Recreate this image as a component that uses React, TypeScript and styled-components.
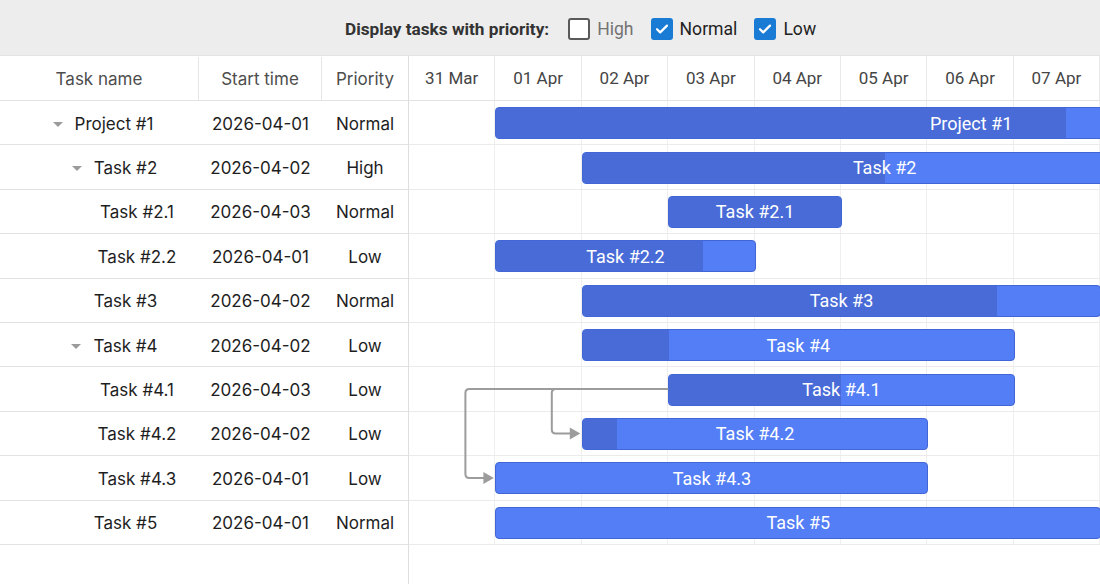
import React from "react";
import styled, { createGlobalStyle } from "styled-components";

const DAY = 86.4;
const ROW = 44.4;
const BAR_H = 32;

const DAYS = [
  "31 Mar",
  "01 Apr",
  "02 Apr",
  "03 Apr",
  "04 Apr",
  "05 Apr",
  "06 Apr",
  "07 Apr",
  "08 Apr",
  "09 Apr",
  "10 Apr",
  "11 Apr",
  "12 Apr",
];

type Task = {
  id: string;
  name: string;
  level: number;
  hasChildren?: boolean;
  date: string;
  priority: "High" | "Normal" | "Low";
  startDay: number;
  days: number;
  progress: number;
};

const TASKS: Task[] = [
  { id: "1", name: "Project #1", level: 0, hasChildren: true, date: "2026-04-01", priority: "Normal", startDay: 1, days: 11, progress: 60 },
  { id: "2", name: "Task #2", level: 1, hasChildren: true, date: "2026-04-02", priority: "High", startDay: 2, days: 7, progress: 50 },
  { id: "2.1", name: "Task #2.1", level: 2, date: "2026-04-03", priority: "Normal", startDay: 3, days: 2, progress: 100 },
  { id: "2.2", name: "Task #2.2", level: 2, date: "2026-04-01", priority: "Low", startDay: 1, days: 3, progress: 80 },
  { id: "3", name: "Task #3", level: 1, date: "2026-04-02", priority: "Normal", startDay: 2, days: 6, progress: 80 },
  { id: "4", name: "Task #4", level: 1, hasChildren: true, date: "2026-04-02", priority: "Low", startDay: 2, days: 5, progress: 20 },
  { id: "4.1", name: "Task #4.1", level: 2, date: "2026-04-03", priority: "Low", startDay: 3, days: 4, progress: 50 },
  { id: "4.2", name: "Task #4.2", level: 2, date: "2026-04-02", priority: "Low", startDay: 2, days: 4, progress: 10 },
  { id: "4.3", name: "Task #4.3", level: 2, date: "2026-04-01", priority: "Low", startDay: 1, days: 5, progress: 0 },
  { id: "5", name: "Task #5", level: 1, date: "2026-04-01", priority: "Normal", startDay: 1, days: 7, progress: 0 },
];

// start-to-start dependencies between tasks
const LINKS: [string, string][] = [
  ["4.1", "4.2"],
  ["4.1", "4.3"],
];

const GlobalStyle = createGlobalStyle`
  * { box-sizing: border-box; }
  html, body { margin: 0; padding: 0; background: #ffffff; }
  body {
    font-family: Inter, "Noto Sans", sans-serif;
    -webkit-font-smoothing: antialiased;
  }
`;

const Page = styled.div`
  width: 1100px;
  height: 584px;
  display: flex;
  flex-direction: column;
  overflow: hidden;
  background: #ffffff;
`;

const Toolbar = styled.div`
  flex: none;
  height: 56px;
  display: flex;
  align-items: center;
  gap: 17px;
  padding-left: 345px;
  padding-top: 2px;
  background: #ededed;
  border-bottom: 1px solid #e3e3e3;
  font-family: Roboto, "Liberation Sans", sans-serif;
  font-size: 17.6px;
  color: #222222;
`;

const ToolbarTitle = styled.span`
  font-weight: 700;
  font-size: 17.2px;
  color: #333333;
  margin-right: 2px;
`;

const Option = styled.label`
  display: flex;
  align-items: center;
  gap: 7px;
`;

const Box = styled.span<{ $checked: boolean }>`
  width: 22px;
  height: 22px;
  border-radius: 3px;
  display: flex;
  align-items: center;
  justify-content: center;
  background: ${(p) => (p.$checked ? "#1a7bd5" : "#ffffff")};
  border: 2px solid ${(p) => (p.$checked ? "#1a7bd5" : "#5a5a5a")};
`;

const OptionText = styled.span<{ $checked: boolean }>`
  color: ${(p) => (p.$checked ? "#222222" : "#737373")};
`;

const Gantt = styled.div`
  flex: 1;
  display: flex;
  min-height: 0;
`;

const LeftPanel = styled.div`
  flex: none;
  width: 409px;
  border-right: 1px solid #dedede;
  display: flex;
  flex-direction: column;
`;

const TableRow = styled.div<{ $head?: boolean }>`
  display: grid;
  grid-template-columns: 199px 123px 86px;
  height: ${(p) => (p.$head ? "45px" : `${ROW}px`)};
  padding-top: ${(p) => (p.$head ? "1px" : "2px")};
  border-bottom: 1px solid #e2e2e2;
  font-size: 17px;
  color: ${(p) => (p.$head ? "#4d4d4d" : "#1e1e1e")};
`;

const HeadCell = styled.div`
  display: flex;
  align-items: center;
  justify-content: center;
  border-right: 1px solid #e6e6e6;
  &:last-child {
    border-right: none;
  }
`;

const Cell = styled.div`
  display: flex;
  align-items: center;
  justify-content: center;
  white-space: nowrap;
`;

const NameCell = styled(Cell)<{ $level: number }>`
  padding-left: ${(p) => 7 + p.$level * 23}px;
`;

const ToggleSlot = styled.span`
  width: 22px;
  flex: none;
  display: flex;
  align-items: center;
`;

const Caret = styled.span`
  width: 0;
  height: 0;
  border-left: 5px solid transparent;
  border-right: 5px solid transparent;
  border-top: 5px solid #9b9b9b;
  margin-top: 1px;
`;

const ChartPanel = styled.div`
  flex: 1;
  overflow: hidden;
`;

const ChartInner = styled.div<{ $days: number }>`
  width: ${(p) => p.$days * DAY}px;
`;

const DateHeader = styled.div<{ $days: number }>`
  display: grid;
  grid-template-columns: repeat(${(p) => p.$days}, ${DAY}px);
  height: 45px;
  border-bottom: 1px solid #e2e2e2;
`;

const DateCell = styled.div`
  display: flex;
  align-items: center;
  justify-content: center;
  border-right: 1px solid #e9e9e9;
  font-family: Roboto, "Liberation Sans", sans-serif;
  font-size: 17px;
  color: #454545;
`;

const ChartBody = styled.div`
  position: relative;
`;

const ChartRow = styled.div`
  position: relative;
  height: ${ROW}px;
  border-bottom: 1px solid #ebebeb;
  background-image: repeating-linear-gradient(
    to right,
    transparent 0,
    transparent ${DAY - 1}px,
    #efefef ${DAY - 1}px,
    #efefef ${DAY}px
  );
`;

const Bar = styled.div`
  position: absolute;
  top: ${(ROW - BAR_H) / 2}px;
  height: ${BAR_H}px;
  border-radius: 4px;
  border: 1px solid #4266d6;
  background: #537ef6;
  overflow: hidden;
  display: flex;
  align-items: center;
  justify-content: center;
`;

const Progress = styled.div`
  position: absolute;
  left: 0;
  top: 0;
  bottom: 0;
  background: #486bd7;
`;

const BarLabel = styled.span`
  position: relative;
  font-family: Roboto, "Liberation Sans", sans-serif;
  font-size: 18px;
  color: #ffffff;
  white-space: nowrap;
`;

const LinkLayer = styled.svg`
  position: absolute;
  left: 0;
  top: 0;
  pointer-events: none;
  overflow: visible;
`;

const CheckMark = () => (
  <svg width="16" height="16" viewBox="0 0 16 16" fill="none">
    <path d="M3 8.2l3.2 3.2L13 4.6" stroke="#ffffff" strokeWidth="2.2" strokeLinecap="round" strokeLinejoin="round" />
  </svg>
);

function PriorityOption({ label, checked }: { label: string; checked: boolean }) {
  return (
    <Option>
      <Box $checked={checked}>{checked && <CheckMark />}</Box>
      <OptionText $checked={checked}>{label}</OptionText>
    </Option>
  );
}

function linkPath(from: Task, to: Task, fromIdx: number, toIdx: number) {
  const sx = from.startDay * DAY;
  const sy = fromIdx * ROW + ROW / 2 - 0.5;
  const tx = to.startDay * DAY;
  const ty = toIdx * ROW + ROW / 2 - 0.5;
  const mx = tx - 30;
  const r = 4;
  const line = `M ${sx} ${sy} H ${mx + r} Q ${mx} ${sy} ${mx} ${sy + r} V ${ty - r} Q ${mx} ${ty} ${mx + r} ${ty} H ${tx - 11}`;
  const arrow = `${tx - 12},${ty - 6} ${tx - 1.5},${ty} ${tx - 12},${ty + 6}`;
  return { line, arrow };
}

export default function App() {
  const indexOf = (id: string) => TASKS.findIndex((t) => t.id === id);

  return (
    <Page>
      <GlobalStyle />
      <Toolbar>
        <ToolbarTitle>Display tasks with priority:</ToolbarTitle>
        <PriorityOption label="High" checked={false} />
        <PriorityOption label="Normal" checked />
        <PriorityOption label="Low" checked />
      </Toolbar>

      <Gantt>
        <LeftPanel>
          <TableRow $head>
            <HeadCell>Task name</HeadCell>
            <HeadCell>Start time</HeadCell>
            <HeadCell>Priority</HeadCell>
          </TableRow>
          {TASKS.map((t) => (
            <TableRow key={t.id}>
              <NameCell $level={t.level}>
                <ToggleSlot>{t.hasChildren && <Caret />}</ToggleSlot>
                <span>{t.name}</span>
              </NameCell>
              <Cell>{t.date}</Cell>
              <Cell>{t.priority}</Cell>
            </TableRow>
          ))}
        </LeftPanel>

        <ChartPanel>
          <ChartInner $days={DAYS.length}>
            <DateHeader $days={DAYS.length}>
              {DAYS.map((d) => (
                <DateCell key={d}>{d}</DateCell>
              ))}
            </DateHeader>
            <ChartBody>
              {TASKS.map((t) => (
                <ChartRow key={t.id}>
                  <Bar style={{ left: t.startDay * DAY, width: t.days * DAY + 1 }}>
                    <Progress style={{ width: `${t.progress}%` }} />
                    <BarLabel>{t.name}</BarLabel>
                  </Bar>
                </ChartRow>
              ))}
              <LinkLayer width={DAYS.length * DAY} height={TASKS.length * ROW}>
                {LINKS.map(([a, b]) => {
                  const ai = indexOf(a);
                  const bi = indexOf(b);
                  const { line, arrow } = linkPath(TASKS[ai], TASKS[bi], ai, bi);
                  return (
                    <g key={`${a}-${b}`}>
                      <path d={line} fill="none" stroke="#9c9c9c" strokeWidth="2" />
                      <polygon points={arrow} fill="#9c9c9c" />
                    </g>
                  );
                })}
              </LinkLayer>
            </ChartBody>
          </ChartInner>
        </ChartPanel>
      </Gantt>
    </Page>
  );
}
